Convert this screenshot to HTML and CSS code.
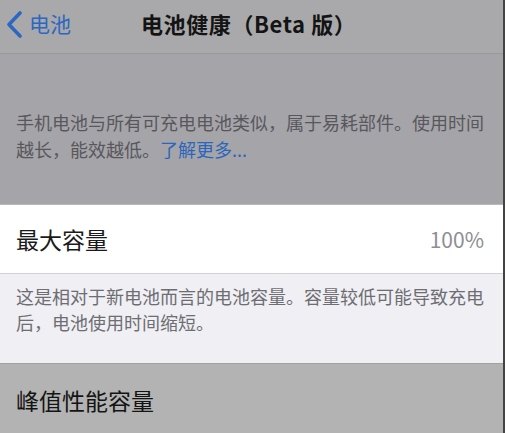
FILE: index.html
```html
<!DOCTYPE html>
<html lang="zh-CN">
<head>
  <meta charset="UTF-8">
  <meta name="viewport" content="width=device-width, initial-scale=1.0">
  <title>电池健康</title>
  <link rel="stylesheet" href="styles.css">
</head>
<body>
  <div class="screen">
    <header class="nav-bar">
      <a class="back" href="#">
        <svg class="chevron" width="17" height="27" viewBox="0 0 17 27">
          <path d="M14 2 L3 13.5 L14 25" fill="none" stroke="currentColor" stroke-width="3.6" stroke-linecap="round" stroke-linejoin="round"/>
        </svg>
        <span>电池</span>
      </a>
      <h1 class="title">电池健康（Beta 版）</h1>
    </header>

    <section class="intro">
      <p>手机电池与所有可充电电池类似，属于易耗部件。使用时间越长，能效越低。<a href="#">了解更多...</a></p>
    </section>

    <div class="row">
      <span class="label">最大容量</span>
      <span class="value">100%</span>
    </div>

    <section class="footnote">
      <p>这是相对于新电池而言的电池容量。容量较低可能导致充电后，电池使用时间缩短。</p>
    </section>

    <div class="row row-dim">
      <span class="label">峰值性能容量</span>
    </div>
  </div>
</body>
</html>
```

FILE: styles.css
```css
/* Reset */
* {
  margin: 0;
  padding: 0;
  box-sizing: border-box;
}

body {
  font-family: "Noto Sans CJK SC", "Noto Sans", sans-serif;
  width: 505px;
  height: 433px;
  overflow: hidden;
  background-color: #b3b3b3;
}

.screen {
  display: flex;
  flex-direction: column;
  height: 433px;
  border-right: 2px solid rgba(30, 30, 30, 0.75);
}

/* Navigation bar */
.nav-bar {
  position: relative;
  height: 54px;
  flex-shrink: 0;
  background-color: #a9a9ab;
  border-bottom: 1px solid #99999b;
  display: flex;
  align-items: center;
}

.back {
  display: flex;
  align-items: center;
  gap: 6px;
  padding-left: 6px;
  margin-top: -4px;
  color: #2c67c0;
  text-decoration: none;
  font-size: 21px;
  line-height: 1;
}

.back span {
  margin-top: -2px;
}

.title {
  position: absolute;
  left: 141px;
  top: 0;
  line-height: 47px;
  font-size: 22px;
  font-weight: 700;
  color: #141414;
  letter-spacing: 0.6px;
}

/* Intro text on grey */
.intro {
  height: 151px;
  flex-shrink: 0;
  background-color: #a5a4a9;
  border-bottom: 1px solid #b9b8bd;
  padding: 55px 18px 0 16px;
}

.intro p {
  font-size: 18px;
  line-height: 27px;
  color: #58585c;
}

.intro a {
  color: #2b66bb;
  text-decoration: none;
}

/* Table rows */
.row {
  height: 69px;
  flex-shrink: 0;
  display: flex;
  align-items: center;
  justify-content: space-between;
  padding: 0 19px 0 16px;
  background-color: #fff;
  border-bottom: 1px solid #d2d1d6;
}

.label {
  font-size: 23px;
  color: #1a1a1a;
}

.value {
  font-size: 21px;
  color: #8e8e93;
}

.row-dim {
  flex: 1;
  align-items: flex-start;
  padding-top: 19px;
  background-color: #b3b3b3;
  border-bottom: none;
  border-top: 1px solid #9f9fa1;
}

.row-dim .label {
  color: #141414;
}

/* Footnote on light grey */
.footnote {
  height: 89px;
  flex-shrink: 0;
  background-color: #efeff4;
  padding: 9px 18px 0 16px;
}

.footnote p {
  font-size: 18px;
  line-height: 26px;
  color: #6d6d72;
}
```
